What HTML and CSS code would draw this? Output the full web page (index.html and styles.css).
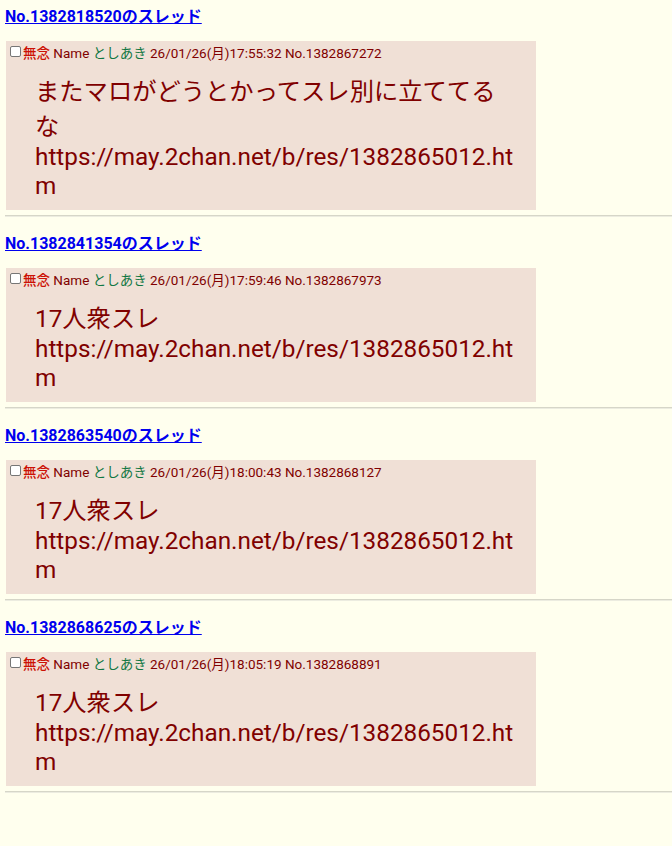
FILE: index.html
```html
<!DOCTYPE html>
<html lang="ja">
<head>
<meta charset="utf-8">
<title>スレッド</title>
<link rel="stylesheet" href="styles.css">
</head>
<body>
<div class="thread">
  <div class="thread-link"><a href="#">No.1382818520のスレッド</a></div>
  <div class="post">
    <div class="head"><input type="checkbox" class="del"><span class="sub">無念</span> Name <span class="name">としあき</span> 26/01/26(月)17:55:32 No.1382867272</div>
    <blockquote class="body">またマロがどうとかってスレ別に立ててるな<br>https://may.2chan.net/b/res/1382865012.htm</blockquote>
  </div>
  <hr class="sep">
</div>
<div class="thread">
  <div class="thread-link"><a href="#">No.1382841354のスレッド</a></div>
  <div class="post">
    <div class="head"><input type="checkbox" class="del"><span class="sub">無念</span> Name <span class="name">としあき</span> 26/01/26(月)17:59:46 No.1382867973</div>
    <blockquote class="body">17人衆スレ<br>https://may.2chan.net/b/res/1382865012.htm</blockquote>
  </div>
  <hr class="sep">
</div>
<div class="thread">
  <div class="thread-link"><a href="#">No.1382863540のスレッド</a></div>
  <div class="post">
    <div class="head"><input type="checkbox" class="del"><span class="sub">無念</span> Name <span class="name">としあき</span> 26/01/26(月)18:00:43 No.1382868127</div>
    <blockquote class="body">17人衆スレ<br>https://may.2chan.net/b/res/1382865012.htm</blockquote>
  </div>
  <hr class="sep">
</div>
<div class="thread">
  <div class="thread-link"><a href="#">No.1382868625のスレッド</a></div>
  <div class="post">
    <div class="head"><input type="checkbox" class="del"><span class="sub">無念</span> Name <span class="name">としあき</span> 26/01/26(月)18:05:19 No.1382868891</div>
    <blockquote class="body">17人衆スレ<br>https://may.2chan.net/b/res/1382865012.htm</blockquote>
  </div>
  <hr class="sep">
</div>
</body>
</html>
```
FILE: styles.css
```css
html, body {
  background: #ffffee;
}
body {
  margin: 0;
  padding: 7px 0 0 5px;
  font-family: Roboto, "Noto Sans CJK JP", sans-serif;
  color: #800000;
}
.thread-link {
  font-size: 16px;
  font-weight: bold;
  line-height: 19px;
  margin-bottom: 15px;
}
.thread-link a {
  color: #0000ee;
  text-decoration: underline;
}
.post {
  width: 530px;
  margin-left: 1px;
  background: #f0e0d6;
  padding: 4px 0 10px 0;
}
.head {
  font-size: 13.5px;
  line-height: 16px;
  color: #800000;
}
.del {
  appearance: none;
  -webkit-appearance: none;
  box-sizing: border-box;
  width: 11px;
  height: 11px;
  margin: 0 2px 0 4px;
  border: 1px solid #767676;
  border-radius: 2px;
  background: #fff;
  vertical-align: 1px;
}
.sub {
  color: #cc1105;
  font-weight: 500;
}
.name {
  color: #117743;
}
.body {
  margin: 11px 19px 0 29px;
  font-size: 24.3px;
  line-height: normal;
  word-break: break-all;
}
.sep {
  margin: 5px 0 17px 0;
  height: 0;
  border: 0;
  border-top: 1px solid #d6d6c8;
  border-bottom: 1px solid #ecece0;
}
```
